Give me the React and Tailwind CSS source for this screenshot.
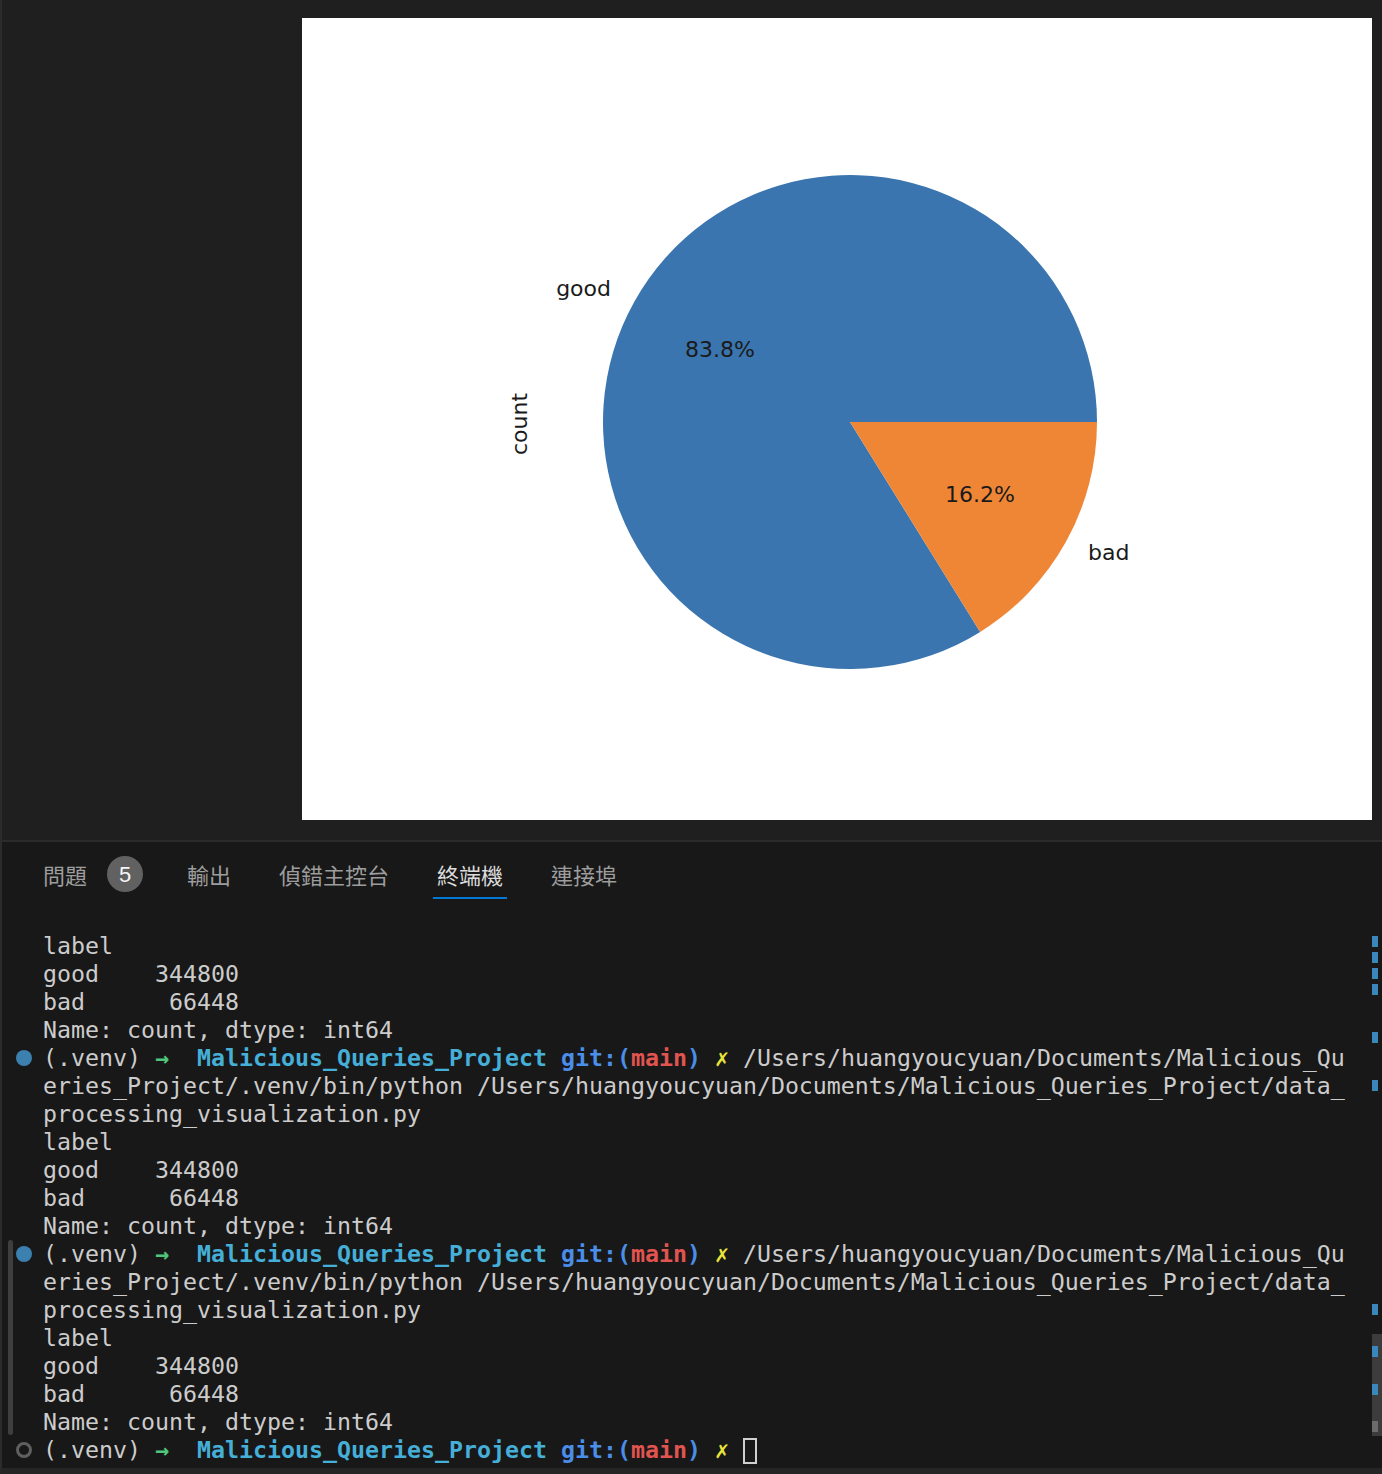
import React from 'react';

const tabs = [
  { id: 'problems', name: '問題', badge: 5 },
  { id: 'output', name: '輸出' },
  { id: 'debug', name: '偵錯主控台' },
  { id: 'terminal', name: '終端機', active: true },
  { id: 'ports', name: '連接埠' },
];

const output = ['label', 'good    344800', 'bad      66448', 'Name: count, dtype: int64'];

// scrollbar overview marks (top offsets inside terminal)
const marks = [4, 20, 36, 52, 100, 148, 372, 414, 452];

function PieChart() {
  return (
    <svg width="1070" height="802" viewBox="0 0 1070 802" className="block">
      <path d="M548 404 L678.2 613.9 A247 247 0 1 1 795 404 Z" fill="#3a75af" />
      <path d="M548 404 L795 404 A247 247 0 0 1 678.2 613.9 Z" fill="#ef8636" />
      <g fontFamily="DejaVu Sans, sans-serif" fontSize="22" fill="#1a1a1a">
        <text x="309" y="278" textAnchor="end">good</text>
        <text x="418" y="339" textAnchor="middle">83.8%</text>
        <text x="678" y="484" textAnchor="middle">16.2%</text>
        <text x="786" y="542">bad</text>
        <text x="225" y="406" textAnchor="middle" transform="rotate(-90 225 406)">count</text>
      </g>
    </svg>
  );
}

function Gutter({ mark }) {
  return (
    <div className="w-[41px] shrink-0 flex items-center pl-[14px]">
      {mark === 'done' && <span className="w-4 h-4 rounded-full bg-[#3b80ae]" />}
      {mark === 'open' && <span className="w-4 h-4 rounded-full border-[3px] border-[#5f5f5f]" />}
    </div>
  );
}

function Line({ mark, children }) {
  return (
    <div className="flex h-[28px] items-center">
      <Gutter mark={mark} />
      <div className="whitespace-pre">{children}</div>
    </div>
  );
}

function PromptHead() {
  return (
    <>
      (.venv) <span className="inline-block w-[14px] text-center font-bold text-[#4ec77d]">→</span>  <span className="font-bold text-[#45afd8]">Malicious_Queries_Project</span> <span className="font-bold text-[#4a8ee8]">git:(</span><span className="font-bold text-[#e25450]">main</span><span className="font-bold text-[#4a8ee8]">)</span> <span className="inline-block w-[14px] text-center text-[#e8e43a]">✗</span>{' '}
    </>
  );
}

function RunBlock({ mark }) {
  return (
    <>
      <Line mark={mark}><PromptHead />/Users/huangyoucyuan/Documents/Malicious_Qu</Line>
      <Line>eries_Project/.venv/bin/python /Users/huangyoucyuan/Documents/Malicious_Queries_Project/data_</Line>
      <Line>processing_visualization.py</Line>
      {output.map((l, i) => <Line key={i}>{l}</Line>)}
    </>
  );
}

export default function App() {
  return (
    <div className="w-[1382px] h-[1474px] flex flex-col bg-[#181818] overflow-hidden">
      {/* image preview */}
      <div className="h-[840px] shrink-0 bg-[#1f1f1f] border-l-2 border-[#2b2b2b] pt-[18px] pl-[300px]">
        <div className="w-[1070px] h-[802px] bg-white">
          <PieChart />
        </div>
      </div>
      <div className="h-[2px] shrink-0 bg-[#2b2b2b]" />

      {/* panel */}
      <div className="flex-1 flex flex-col border-l-2 border-[#2b2b2b] border-b-[6px] border-b-[#252525] pt-[13px]">
        <div className="flex gap-[40px] pl-[37px] font-['Noto_Sans_CJK_TC',sans-serif] text-[22px]">
          {tabs.map(t => (
            <div
              key={t.id}
              className={`h-[44px] flex items-center pb-[4px] pl-1 ${t.badge ? 'pr-0' : 'pr-1'} ${
                t.active ? 'border-b-2 border-[#0078d4] text-[#dcdcdc]' : 'border-b-2 border-transparent text-[#9d9d9d]'
              }`}
            >
              <span>{t.name}</span>
              {t.badge && (
                <span className="ml-[20px] w-9 h-9 rounded-full bg-[#616161] text-[#f5f5f5] flex items-center justify-center font-['Liberation_Sans',sans-serif] text-[22px]">
                  {t.badge}
                </span>
              )}
            </div>
          ))}
        </div>

        <div className="relative mt-[33px] flex-1 font-['DejaVu_Sans_Mono',monospace] text-[23.25px] leading-[28px] text-[#cccccc]">
          {output.map((l, i) => <Line key={i}>{l}</Line>)}
          <RunBlock mark="done" />
          <RunBlock mark="done" />
          <Line mark="open">
            <PromptHead />
            <span className="inline-block w-[14px] h-[26px] align-middle border-2 border-[#d0d0d0]" />
          </Line>

          {/* hovered command bar */}
          <div className="absolute left-[6px] top-[308px] w-[5px] h-[195px] rounded-full bg-[#3e3e3e]" />

          {/* scrollbar */}
          <div className="absolute right-0 top-[402px] w-[10px] h-[102px] bg-[#3c3c3c]" />
          {marks.map(m => (
            <div key={m} className="absolute right-[4px] w-[6px] h-[11px] bg-[#3a88bb]" style={{ top: m }} />
          ))}
          <div className="absolute right-[4px] top-[489px] w-[6px] h-[11px] bg-[#6b6b6b]" />
        </div>
      </div>
    </div>
  );
}
